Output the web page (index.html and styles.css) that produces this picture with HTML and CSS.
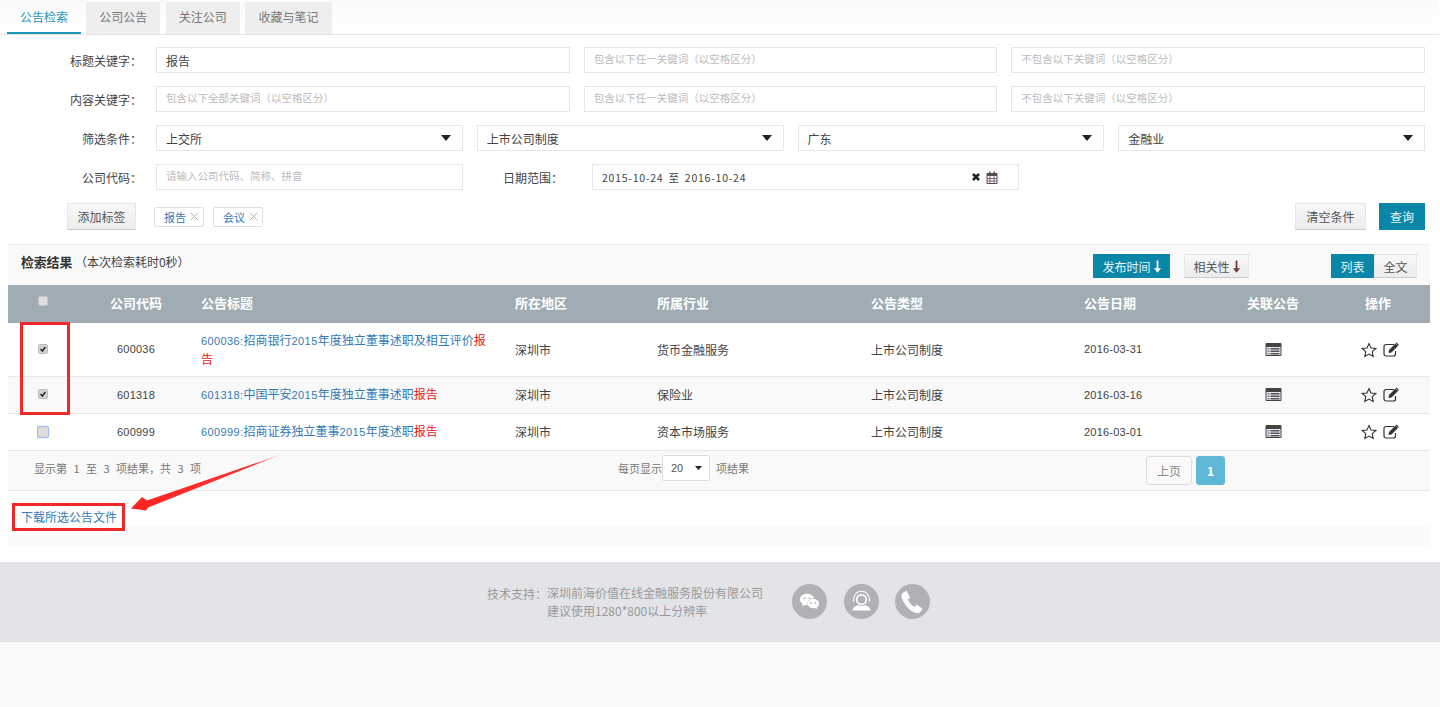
FILE: index.html
```html
<!DOCTYPE html>
<html lang="zh-CN">
<head>
  <meta charset="UTF-8">
  <title>公告检索</title>
  <link rel="stylesheet" href="styles.css">
</head>
<body>
  <svg class="defs" width="0" height="0">
    <symbol id="i-caret" viewBox="0 0 10 6"><path d="M0 0h10L5 6z" fill="currentColor"/></symbol>
    <symbol id="i-times" viewBox="0 0 10 10"><path d="M2 2l6 6M8 2l-6 6" stroke="currentColor" stroke-width="2.6" fill="none"/></symbol>
    <symbol id="i-close" viewBox="0 0 10 10"><path d="M1 1l8 8M9 1l-8 8" stroke="currentColor" stroke-width="1" fill="none"/></symbol>
    <symbol id="i-calendar" viewBox="0 0 12 13"><path d="M1 2.5h10v10H1z" fill="none" stroke="currentColor"/><path d="M1 2h10v3H1zM3 .5h1.500v3H3zM7.500 .5H9v3H7.500z" fill="currentColor"/><path d="M1 7.500h10M1 10h10M4 5v7M8 5v7" stroke="currentColor" stroke-width=".8"/></symbol>
    <symbol id="i-down" viewBox="0 0 8 14"><path d="M3 0h2v9h3l-4 5-4-5h3z" fill="currentColor"/></symbol>
    <symbol id="i-list" viewBox="0 0 16 13"><rect width="16" height="13" rx="1" fill="#444"/><rect x="1" y="4" width="14" height="8" fill="#e8e8ee"/><path d="M2 5h2v1.500H2zM2 7.500h2V9H2zM2 10h2v1.500H2z" fill="#7a86b0"/><path d="M5 5h9v1.500H5zM5 7.500h9V9H5zM5 10h9v1.500H5z" fill="#555"/></symbol>
    <symbol id="i-star" viewBox="0 0 16 16"><path d="M8 1.500l2 4.500 4.800.5-3.600 3.200 1 4.800L8 12.100l-4.200 2.400 1-4.800L1.200 6.500 6 6z" fill="none" stroke="#333" stroke-width="1.100"/></symbol>
    <symbol id="i-edit" viewBox="0 0 17 15"><path d="M12.500 9v3a2 2 0 0 1-2 2H3a2 2 0 0 1-2-2V4.500a2 2 0 0 1 2-2h8" fill="none" stroke="#333" stroke-width="1.200"/><path d="M6 8l6.500-6.500 2.500 2.500L8.500 10.500 5.500 11z" fill="#333"/><path d="M13.500.5L16 3l-.8.8-2.500-2.500z" fill="#333"/></symbol>
    <symbol id="i-wechat" viewBox="0 0 24 24"><path d="M9.500 4C5.400 4 2 6.700 2 10c0 1.900 1.100 3.600 2.800 4.700L4.200 17l2.700-1.400c.8.200 1.700.4 2.600.4h.6c-.2-.6-.3-1.200-.3-1.800 0-3.200 3-5.700 6.700-5.700h.5C16 5.900 13 4 9.500 4z" fill="#fff"/><path d="M22 14.200c0-2.700-2.700-4.900-6-4.900s-6 2.200-6 4.900 2.700 4.900 6 4.900c.7 0 1.400-.1 2-.3l2.200 1.200-.5-1.900c1.400-.9 2.300-2.300 2.300-3.900z" fill="#fff"/><circle cx="7" cy="8.500" r="1" fill="#b0b1b5"/><circle cx="12" cy="8.500" r="1" fill="#b0b1b5"/><circle cx="13.800" cy="13.500" r=".9" fill="#b0b1b5"/><circle cx="18.200" cy="13.500" r=".9" fill="#b0b1b5"/></symbol>
    <symbol id="i-agent" viewBox="0 0 24 24"><circle cx="12" cy="10" r="5" fill="none" stroke="#fff" stroke-width="1.800"/><path d="M3.800 12.500V9.500a8.200 8.200 0 0 1 16.400 0v3" fill="none" stroke="#fff" stroke-width="1.100"/><path d="M2.500 21.500c.5-3.500 3-5 6.300-5.500 2 1 4.400 1 6.400 0 3.300.5 5.800 2 6.300 5.500z" fill="#fff"/></symbol>
    <symbol id="i-phone" viewBox="3.500 3 17 17"><path d="M7.500 3.500L5 5c-1.500 1-1.500 3 0 6 1.800 3.800 4.500 6.800 8 8.500 2.200 1 4 .8 5-.5l1.500-2.200-4.300-3-1.700 1.700c-1.800-.8-4-3.200-5-5.500l1.800-1.500z" fill="#fff"/></symbol>
  </svg>

  <div class="page">
    <div class="main">
      <!-- Tabs -->
      <ul class="tabs">
        <li class="tab active">公告检索</li>
        <li class="tab">公司公告</li>
        <li class="tab">关注公司</li>
        <li class="tab tab-wide">收藏与笔记</li>
      </ul>

      <!-- Search form -->
      <form class="search-form">
        <div class="form-row">
          <label class="form-label">标题关键字：</label>
          <div class="fields">
            <input class="field" type="text" value="报告">
            <input class="field" type="text" placeholder="包含以下任一关键词（以空格区分）">
            <input class="field" type="text" placeholder="不包含以下关键词（以空格区分）">
          </div>
        </div>
        <div class="form-row">
          <label class="form-label">内容关键字：</label>
          <div class="fields">
            <input class="field" type="text" placeholder="包含以下全部关键词（以空格区分）">
            <input class="field" type="text" placeholder="包含以下任一关键词（以空格区分）">
            <input class="field" type="text" placeholder="不包含以下关键词（以空格区分）">
          </div>
        </div>
        <div class="form-row">
          <label class="form-label">筛选条件：</label>
          <div class="fields">
            <div class="field select">上交所<svg class="caret"><use href="#i-caret"/></svg></div>
            <div class="field select">上市公司制度<svg class="caret"><use href="#i-caret"/></svg></div>
            <div class="field select">广东<svg class="caret"><use href="#i-caret"/></svg></div>
            <div class="field select">金融业<svg class="caret"><use href="#i-caret"/></svg></div>
          </div>
        </div>
        <div class="form-row">
          <label class="form-label">公司代码：</label>
          <input class="field code-field" type="text" placeholder="请输入公司代码、简称、拼音">
          <label class="date-label">日期范围：</label>
          <div class="field date-field">
            <span class="date-text">2015-10-24 至 2016-10-24</span>
            <svg class="icon-times"><use href="#i-times"/></svg>
            <svg class="icon-calendar"><use href="#i-calendar"/></svg>
          </div>
        </div>
        <div class="form-actions">
          <button type="button" class="btn btn-add">添加标签</button>
          <span class="tag">报告<svg class="tag-close"><use href="#i-close"/></svg></span>
          <span class="tag">会议<svg class="tag-close"><use href="#i-close"/></svg></span>
          <button type="button" class="btn btn-clear">清空条件</button>
          <button type="button" class="btn btn-primary btn-query">查询</button>
        </div>
      </form>

      <!-- Results -->
      <div class="results">
        <div class="results-head">
          <div class="results-title"><strong>检索结果</strong> <span>（本次检索耗时0秒）</span></div>
          <button type="button" class="btn btn-primary btn-sort">发布时间<svg class="icon-down"><use href="#i-down"/></svg></button>
          <button type="button" class="btn btn-sort btn-rel">相关性<svg class="icon-down icon-down-dark"><use href="#i-down"/></svg></button>
          <div class="view-switch">
            <button type="button" class="btn btn-primary">列表</button>
            <button type="button" class="btn">全文</button>
          </div>
        </div>

        <table class="result-table">
          <colgroup>
            <col class="c-check"><col class="c-code"><col class="c-title"><col class="c-region">
            <col class="c-industry"><col class="c-type"><col class="c-date"><col class="c-rel"><col class="c-op">
          </colgroup>
          <thead>
            <tr>
              <th class="center"><span class="check check-head"></span></th>
              <th class="center">公司代码</th>
              <th>公告标题</th>
              <th>所在地区</th>
              <th>所属行业</th>
              <th>公告类型</th>
              <th>公告日期</th>
              <th class="center">关联公告</th>
              <th class="center">操作</th>
            </tr>
          </thead>
          <tbody>
            <tr class="row-tall">
              <td class="center"><span class="check"><svg viewBox="0 0 10 10"><path d="M2 5l2.200 2.500L8 2.500" fill="none" stroke="#222" stroke-width="1.800"/></svg></span></td>
              <td class="center num">600036</td>
              <td class="title-cell"><a href="#"><span class="num">600036:</span>招商银行<span class="num">2015</span>年度独立董事述职及相互评价<em>报告</em></a></td>
              <td>深圳市</td>
              <td>货币金融服务</td>
              <td>上市公司制度</td>
              <td class="num">2016-03-31</td>
              <td class="center"><svg class="icon-list"><use href="#i-list"/></svg></td>
              <td class="center"><svg class="icon-star"><use href="#i-star"/></svg><svg class="icon-edit"><use href="#i-edit"/></svg></td>
            </tr>
            <tr class="row-alt">
              <td class="center"><span class="check"><svg viewBox="0 0 10 10"><path d="M2 5l2.200 2.500L8 2.500" fill="none" stroke="#222" stroke-width="1.800"/></svg></span></td>
              <td class="center num">601318</td>
              <td class="title-cell"><a href="#"><span class="num">601318:</span>中国平安<span class="num">2015</span>年度独立董事述职<em>报告</em></a></td>
              <td>深圳市</td>
              <td>保险业</td>
              <td>上市公司制度</td>
              <td class="num">2016-03-16</td>
              <td class="center"><svg class="icon-list"><use href="#i-list"/></svg></td>
              <td class="center"><svg class="icon-star"><use href="#i-star"/></svg><svg class="icon-edit"><use href="#i-edit"/></svg></td>
            </tr>
            <tr>
              <td class="center"><span class="check check-focus"></span></td>
              <td class="center num">600999</td>
              <td class="title-cell"><a href="#"><span class="num">600999:</span>招商证券独立董事<span class="num">2015</span>年度述职<em>报告</em></a></td>
              <td>深圳市</td>
              <td>资本市场服务</td>
              <td>上市公司制度</td>
              <td class="num">2016-03-01</td>
              <td class="center"><svg class="icon-list"><use href="#i-list"/></svg></td>
              <td class="center"><svg class="icon-star"><use href="#i-star"/></svg><svg class="icon-edit"><use href="#i-edit"/></svg></td>
            </tr>
          </tbody>
        </table>

        <div class="table-foot">
          <div class="foot-info">显示第 1 至 3 项结果，共 3 项</div>
          <div class="foot-size">每页显示<div class="size-select">20<svg class="caret caret-small"><use href="#i-caret"/></svg></div><span class="size-after">项结果</span></div>
          <div class="pager">
            <a class="page-btn" href="#">上页</a>
            <a class="page-btn current" href="#">1</a>
          </div>
        </div>

        <div class="download-row"><a href="#">下载所选公告文件</a></div>
        <div class="results-end"></div>
      </div>
    </div>

    <!-- Footer -->
    <footer class="footer">
      <div class="support-label">技术支持：</div>
      <div class="support-text">
        <div>深圳前海价值在线金融服务股份有限公司</div>
        <div>建议使用1280*800以上分辨率</div>
      </div>
      <div class="contact"><svg><use href="#i-wechat"/></svg></div>
      <div class="contact"><svg><use href="#i-agent"/></svg></div>
      <div class="contact"><svg><use href="#i-phone"/></svg></div>
    </footer>

    <!-- Red annotations drawn over the screenshot -->
    <div class="mark mark-checks"></div>
    <div class="mark mark-download"></div>
    <svg class="mark-arrow" viewBox="0 0 170 70">
      <defs>
        <linearGradient id="arrow-fade" x1="1" y1="0" x2="0" y2="1">
          <stop offset="0" stop-color="#f88" stop-opacity=".3"/>
          <stop offset=".2" stop-color="#f33"/>
          <stop offset="1" stop-color="#f22"/>
        </linearGradient>
      </defs>
      <path d="M165 3L27 50.500 22 47 11 58.500 26 60.500l2-3z" fill="url(#arrow-fade)"/>
    </svg>
  </div>
</body>
</html>
```

FILE: styles.css
```css
/* Base styling */
* {
  box-sizing: border-box;
}

body {
  margin: 0;
  height: 707px;
  overflow: hidden;
  background: #fafafa;
  color: #555;
  font-family: "Noto Sans CJK SC", "Liberation Sans", sans-serif;
  font-size: 12px;
}

a {
  color: #337ab7;
  text-decoration: none;
}

.defs {
  position: absolute;
}

.page {
  position: relative;
}

.main {
  background: #fff;
  height: 562px;
  border-right: 1px solid #fff;
}

/* Tabs */
.tabs {
  display: flex;
  gap: 5.330px;
  height: 35px;
  margin: 0;
  padding: 2px 0 0 7px;
  list-style: none;
  background: linear-gradient(#fafafa, #fff);
  border-bottom: 1px solid #e3e3e3;
}

.tab {
  width: 74px;
  height: 32px;
  line-height: 30px;
  text-align: center;
  background: #eee;
  color: #777;
}

.tab-wide {
  width: 87px;
}

.tab.active {
  background: transparent;
  color: #1d95b8;
  border-bottom: 2px solid #1a95b8;
}

/* Search form */
.search-form {
  display: flex;
  flex-direction: column;
  gap: 13px;
  padding: 12px 14px 0 0;
}

.form-row {
  display: flex;
  align-items: center;
  height: 26px;
}

.form-label {
  width: 156px;
  padding-right: 14px;
  text-align: right;
  color: #444;
}

.fields {
  flex: 1;
  display: flex;
  gap: 14px;
}

.field {
  flex: 1;
  min-width: 0;
  height: 26px;
  padding: 0 9px;
  border: 1px solid #e6e6e6;
  background: #fff;
  color: #444;
  font-family: inherit;
  font-size: 12px;
  outline: none;
}

.field:placeholder-shown {
  padding-bottom: 5px;
}

.field::placeholder {
  color: #bbb;
  font-size: 10.500px;
}

.select {
  display: flex;
  align-items: center;
  justify-content: space-between;
}

.caret {
  width: 10px;
  height: 6px;
  margin-right: 2px;
  color: #222;
}

.code-field {
  flex: none;
  width: 307px;
}

.date-label {
  width: 129px;
  padding-left: 40px;
  color: #444;
}

.date-field {
  flex: none;
  width: 427px;
  display: flex;
  align-items: center;
}

.date-text {
  flex: 1;
  font-size: 10.500px;
  letter-spacing: .75px;
  word-spacing: 2px;
}

.icon-times {
  width: 10px;
  height: 10px;
  margin-right: 5px;
  color: #222;
}

.icon-calendar {
  width: 12px;
  height: 13px;
  margin-right: 11px;
  color: #5a4a5a;
}

.form-actions {
  display: flex;
  align-items: center;
  height: 27px;
  padding-left: 67px;
}

/* Buttons */
.btn {
  height: 27px;
  padding: 0;
  border: 1px solid #e6e6e6;
  border-bottom-color: #ccc;
  background: linear-gradient(#f8f8f8, #ececec);
  color: #555;
  font-family: inherit;
  font-size: 12px;
}

.btn-primary {
  border-color: #0a86a8;
  background: #0a86a8;
  color: #e8f6fa;
}

.btn-add {
  width: 69px;
  margin-right: 18px;
}

.btn-clear {
  width: 71px;
  margin-left: auto;
}

.btn-query {
  width: 46px;
  margin-left: 13px;
}

.tag {
  display: flex;
  align-items: center;
  justify-content: space-between;
  width: 50px;
  height: 20px;
  margin-right: 9px;
  padding: 0 4px 0 9px;
  border: 1px solid #e0e0e0;
  border-radius: 2px;
  color: #337ab7;
  font-size: 11px;
}

.tag-close {
  width: 9px;
  height: 9px;
  color: #aaa;
}

/* Results */
.results {
  width: 1422px;
  margin: 14px 0 0 8px;
}

.results-head {
  display: flex;
  align-items: center;
  height: 41px;
  padding: 0 13px;
  background: #f9f9f9;
  border-top: 1px solid #f0f0f0;
}

.results-title {
  flex: 1;
  margin-top: -8px;
  color: #444;
}

.results-title strong {
  color: #333;
  font-size: 12.800px;
}

.btn-sort {
  display: flex;
  align-items: center;
  justify-content: center;
  gap: 3px;
  width: 77px;
  height: 24px;
  margin-top: 2px;
}

.btn-rel {
  width: 65px;
  margin: 2px 82px 0 14px;
}

.icon-down {
  width: 7px;
  height: 13px;
  color: #fff;
}

.icon-down-dark {
  color: #6a3a3a;
}

.view-switch {
  display: flex;
  margin-top: 2px;
}

.view-switch .btn {
  width: 43px;
  height: 24px;
}

.result-table {
  width: 100%;
  table-layout: fixed;
  border-collapse: collapse;
}

.c-check { width: 70px; }
.c-code { width: 116px; }
.c-title { width: 314px; }
.c-region { width: 142px; }
.c-industry { width: 214px; }
.c-type { width: 213px; }
.c-date { width: 143px; }
.c-rel { width: 106px; }
.c-op { width: 104px; }

.result-table th {
  height: 38px;
  padding: 0 0 3px 7px;
  background: #a0acb4;
  color: #fff;
  font-size: 13px;
  font-weight: bold;
  text-align: left;
}

.result-table td {
  height: 37px;
  padding: 0 0 0 7px;
  border-bottom: 1px solid #e8e8e8;
  color: #444;
}

.result-table .center {
  padding-left: 0;
  text-align: center;
}

.row-tall td {
  height: 53px;
}

.row-alt td {
  background: #f9f9f9;
}

.num {
  font-family: "Liberation Sans", sans-serif;
  font-size: 11px;
  letter-spacing: .2px;
}

.title-cell {
  padding-right: 20px !important;
  line-height: 17px;
}

.title-cell .num {
  letter-spacing: .4px;
}

.title-cell em {
  color: #f01414;
  font-style: normal;
}

.check {
  display: inline-block;
  width: 10px;
  height: 10px;
  border-radius: 2px;
  background: #d4d4d4;
  border: 1px solid #bbb;
  vertical-align: 1px;
}

.check svg {
  display: block;
  width: 8px;
  height: 8px;
}

.check-head {
  background: #ddd;
  border-color: #c8c8c8;
  vertical-align: 2px;
}

.check-focus {
  width: 12px;
  height: 12px;
  background: #ddd;
  border-color: #9dbdec;
  box-shadow: 0 0 1px #9dbdec;
  vertical-align: -1px;
}

.icon-list {
  width: 17px;
  height: 13px;
  vertical-align: -1px;
}

.icon-star {
  width: 16px;
  height: 16px;
  margin: 0 6px 0 4px;
  vertical-align: -3px;
}

.icon-edit {
  width: 17px;
  height: 15px;
  vertical-align: -2px;
}

/* Table footer */
.table-foot {
  display: flex;
  align-items: center;
  height: 40px;
  padding-left: 26px;
  background: #f9f9f9;
  border-bottom: 1px solid #e6e6e6;
  color: #777;
  font-size: 11px;
}

.foot-info {
  width: 584px;
  margin-top: -4px;
  word-spacing: 4px;
}

.foot-size {
  display: flex;
  align-items: center;
  width: 528px;
  margin-top: -4px;
}

.size-select {
  display: flex;
  align-items: center;
  justify-content: space-between;
  width: 48px;
  height: 26px;
  padding: 0 5px 0 8px;
  border: 1px solid #ddd;
  border-radius: 2px;
  background: #fff;
  color: #555;
  font-family: "Liberation Sans", sans-serif;
}

.caret-small {
  width: 7px;
  height: 6px;
}

.size-after {
  margin-left: 6px;
}

.pager {
  display: flex;
  gap: 4px;
}

.page-btn {
  width: 46px;
  height: 29px;
  line-height: 27px;
  text-align: center;
  border: 1px solid #ddd;
  border-radius: 3px;
  color: #888;
  font-size: 12px;
}

.page-btn.current {
  width: 29px;
  border-color: #5fb9d6;
  background: #5fb9d6;
  color: #fff;
  font-weight: bold;
}

.download-row {
  height: 35px;
  padding: 18px 0 0 13px;
  line-height: 16px;
}

.results-end {
  height: 20px;
  background: #fafafa;
}

/* Footer */
.footer {
  display: flex;
  align-items: center;
  height: 80px;
  padding-left: 487px;
  background: #e3e4e8;
  color: #999;
}

.support-label {
  width: 60px;
  align-self: flex-start;
  margin-top: 23px;
}

.support-text {
  width: 245px;
  line-height: 18px;
}

.contact {
  width: 35px;
  height: 35px;
  margin-right: 16.500px;
  margin-top: -2px;
  padding: 6px;
  border-radius: 50%;
  background: #b0b1b5;
}

.contact svg {
  display: block;
  width: 23px;
  height: 23px;
}

/* Annotations */
.mark {
  position: absolute;
  border: 3px solid #f02828;
}

.mark-checks {
  left: 20px;
  top: 322px;
  width: 50px;
  height: 93px;
}

.mark-download {
  left: 12px;
  top: 503px;
  width: 113px;
  height: 28px;
}

.mark-arrow {
  position: absolute;
  left: 120px;
  top: 450px;
  width: 170px;
  height: 70px;
}
```
